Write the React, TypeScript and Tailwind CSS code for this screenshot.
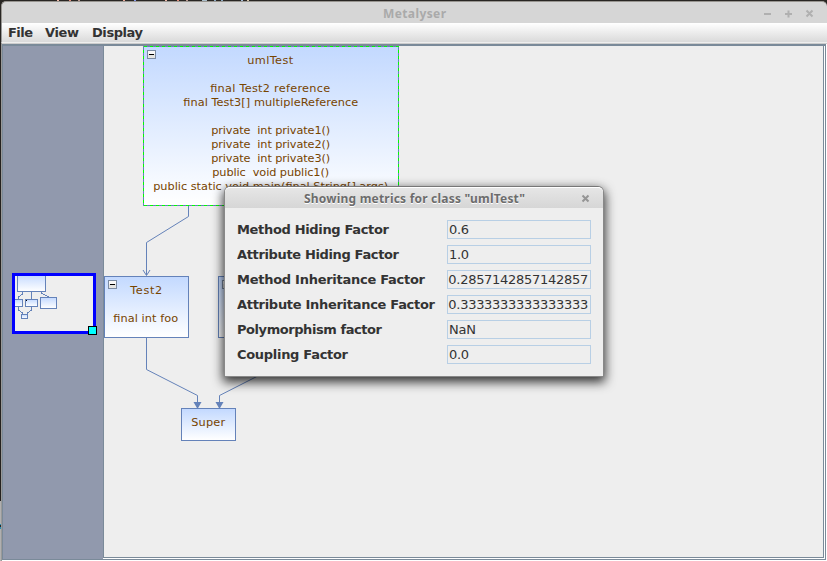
import React from 'react';

type Line = [text: string, width: number];

const metrics: { label: string; value: string; width: string; valueWidth: number; tight?: boolean }[] = [
  { label: 'Method Hiding Factor', value: '0.6', width: '152', valueWidth: 20 },
  { label: 'Attribute Hiding Factor', value: '1.0', width: '162', valueWidth: 20 },
  { label: 'Method Inheritance Factor', value: '0.2857142857142857', width: '188', valueWidth: 140, tight: true },
  { label: 'Attribute Inheritance Factor', value: '0.3333333333333333', width: '198', valueWidth: 140, tight: true },
  { label: 'Polymorphism factor', value: 'NaN', width: '145', valueWidth: 27 },
  { label: 'Coupling Factor', value: '0.0', width: '111', valueWidth: 20 },
];

function Collapse() {
  return (
    <svg className="absolute top-[3px] left-[3px]" width="9" height="9" shapeRendering="crispEdges">
      <rect x="0.5" y="0.5" width="8" height="8" rx="1" fill="#e4e4e2" stroke="#7b8ba3" />
      <rect x="1" y="1" width="7" height="3" fill="#f8f8f8" />
      <rect x="2" y="4" width="5" height="1" fill="#000" />
    </svg>
  );
}

function Node({ className, lines, collapsible }: { className: string; lines: Line[]; collapsible?: boolean }) {
  return (
    <div className={`absolute border border-[#6482b9] bg-linear-to-b from-[#c3d9ff] to-white pt-[7px] ${className}`}>
      {collapsible && <Collapse />}
      {lines.map(([text, width], i) => (
        <div key={i} className="flex h-[14px] justify-center">
          {text && (
            <svg className="block overflow-visible" width={width} height="14">
              <text className="whitespace-pre" x="-0.8" y="10" fontSize="11.3" fill="#774400" textLength={width}>
                {text}
              </text>
            </svg>
          )}
        </div>
      ))}
    </div>
  );
}

function MiniMap() {
  return (
    <div className="relative h-[61px] w-[84px] border-[3px] border-[#0000ff] bg-[#eeeeee]">
      <svg className="block" width="78" height="55">
        <defs>
          <linearGradient id="mini" x1="0" y1="0" x2="0" y2="1">
            <stop offset="0" stopColor="#c3d9ff" />
            <stop offset="1" stopColor="#fff" />
          </linearGradient>
        </defs>
        <g fill="none" stroke="#6482b9" shapeRendering="crispEdges">
          <path d="M7.5 16v2l-4 3v2M16.5 16v7M26.5 16v1l7 4M3.5 31v3l4 3v1M16.5 31v3l-4 3v1" />
          <g fill="url(#mini)">
            <rect x="2.5" y="-1.5" width="28" height="17" />
            <rect x="-3.5" y="23.500" width="11" height="7" />
            <rect x="10.500" y="23.500" width="12" height="7" />
            <rect x="25.500" y="21.500" width="16" height="11" />
            <rect x="6.500" y="38.500" width="6" height="4" />
          </g>
        </g>
        <rect x="11" y="24" width="1" height="1" fill="#000" />
      </svg>
      <div className="absolute right-[-4px] bottom-[-4px] h-[9px] w-[9px] border border-black bg-[#00ffff]" />
    </div>
  );
}

function Graph() {
  return (
    <div className="relative h-[511px] w-[719px] overflow-hidden bg-[#eeeeee]">
      <svg className="absolute inset-0" width="720" height="512" viewBox="104 46 720 512">
        <g fill="none" stroke="#6482b9" strokeWidth="1">
          <path d="M188.500 206v10.500L146.500 242.500V275" />
          <path d="M143 270l3.500 5.500L150 270" />
          <path d="M146.500 338v31.500L197.500 395.500V402" />
          <path d="M299 355L219.500 395.500V402" />
        </g>
        <g fill="#6482b9">
          <path d="M193.500 402h8l-4 7zM215.500 402h8l-4 7z" />
        </g>
      </svg>
      <Node
        className="top-0 left-[39px] h-[160px] w-[256px]"
        collapsible
        lines={[
          ['umlTest', 46],
          ['', 0],
          ['final Test2 reference', 120],
          ['final Test3[] multipleReference', 175],
          ['', 0],
          ['private  int private1()', 119],
          ['private  int private2()', 119],
          ['private  int private3()', 119],
          ['public  void public1()', 117],
          ['public static void main(final String[] args)', 235],
        ]}
      />
      <svg className="absolute top-0 left-[39px]" width="256" height="160" shapeRendering="crispEdges">
        <rect x="0.5" y="0.5" width="255" height="159" fill="none" stroke="#00ff00" strokeDasharray="3 3" />
      </svg>
      <Node className="top-[230px] left-0 h-[62px] w-[85px]" collapsible lines={[['Test2', 32], ['', 0], ['final int foo', 65]]} />
      <Node className="top-[230px] left-[114px] h-[62px] w-[85px]" collapsible lines={[]} />
      <Node className="top-[362px] left-[77px] h-[33px] w-[55px]" lines={[['Super', 34]]} />
    </div>
  );
}

function Dialog() {
  return (
    <div className="absolute top-[186px] left-[224px] h-[191px] w-[380px] rounded-t-[6px] border border-[#888] border-t-[#777] bg-[#eeeeee] shadow-[0_4px_11px_1px_rgba(0,0,0,0.8)]">
      <div className="relative flex h-[21px] items-center justify-center rounded-t-[5px] border-t border-white bg-linear-to-b from-[#e6e6e6] to-[#d6d6d6]">
        <svg className="block" width="378" height="20">
          <g fontFamily="'Noto Sans', sans-serif" fontSize="12" fontWeight="bold">
            <text x="79" y="15.500" textLength="221" fill="#fff">Showing metrics for class "umlTest"</text>
            <text x="79" y="14.500" textLength="221" fill="#6c6c6c">Showing metrics for class "umlTest"</text>
          </g>
          <path d="M357.500 7.500l6 6m0-6l-6 6" stroke="#959595" strokeWidth="2" />
        </svg>
      </div>
      <div className="flex flex-col gap-[6px] pt-[12px] pl-[12px]">
        {metrics.map((m) => (
          <div key={m.label} className="flex h-[19px] items-center">
            <svg className="block w-[210px]" height="19">
              <text x="0" y="14" fontSize="13" fontWeight="bold" fill="#333" textLength={m.width}>
                {m.label}
              </text>
            </svg>
            <div className="h-[19px] w-[144px] overflow-hidden border border-[#b8cfe5]">
              <svg className="block" width="142" height="17">
                <text x={m.tight ? 0.3 : 1} y="13" fontSize="13" fill="#333" textLength={m.valueWidth}>
                  {m.value}
                </text>
              </svg>
            </div>
          </div>
        ))}
      </div>
    </div>
  );
}

export default function App() {
  return (
    <div className="relative flex h-[561px] w-[827px] flex-col overflow-hidden bg-[#292623] font-['DejaVu_Sans',sans-serif]">
      <div className="flex h-px shrink-0">
        <div className="ml-[57px] h-px w-[2px] bg-[#efb9a8]" />
        <div className="ml-[10px] h-px w-[2px] bg-[#e18a78]" />
        <div className="ml-[7px] h-px w-[2px] bg-[#b9988e]" />
        <div className="ml-[43px] h-px w-[2px] bg-[#e9a898]" />
        <div className="ml-[9px] h-px w-[2px] bg-[#8498e9]" />
        <div className="ml-[29px] h-px w-[2px] bg-[#efb9a8]" />
        <div className="ml-[10px] h-px w-[2px] bg-[#e18a78]" />
        <div className="ml-[7px] h-px w-[2px] bg-[#b9988e]" />
        <div className="ml-[14px] h-px w-[5px] bg-[#a9bdc9]" />
        <div className="ml-[7px] h-px w-[2px] bg-[#8ba8c0]" />
        <div className="ml-[5px] h-px w-[2px] bg-[#8ba8c0]" />
        <div className="ml-[18px] h-px w-[2px] bg-[#a4bcd7]" />
        <div className="ml-[4px] h-px w-[2px] bg-[#d8c6a9]" />
      </div>
      <div className="ml-px h-[22px] shrink-0 rounded-t-[5px] border-t border-l border-[#989590] bg-[#d6d6d6]">
        <svg className="block" width="825" height="21">
          <text x="381" y="16" fontFamily="'Noto Sans', sans-serif" fontSize="12" fontWeight="bold" textLength="63" fill="#aaa">
            Metalyser
          </text>
          <g stroke="#b0b0b0" strokeWidth="2" fill="none">
            <path d="M762 12h7M783 12h7M786.500 8.500v7M804.500 8.500l6 6m0-6l-6 6" />
          </g>
        </svg>
      </div>
      <div className="ml-px flex h-[20px] shrink-0 border-b border-l border-b-[#eee] border-l-[#999] bg-linear-to-b from-white to-[#dadada]">
        <svg className="block" width="160" height="19">
          <g fontSize="13" fontWeight="bold" fill="#333">
            <text x="6" y="14" textLength="25">File</text>
            <text x="43" y="14" textLength="34">View</text>
            <text x="90" y="14" textLength="51">Display</text>
          </g>
        </svg>
      </div>
      <div className="flex h-[518px] shrink-0">
        <div className="flex w-[2px] shrink-0 flex-col border-r border-[#999]">
          <div className="h-[458px] bg-[#24211f]" />
          <div className="h-[23px] bg-[#b0b0b0]" />
          <div className="h-px bg-[#258eb6]" />
          <div className="h-[2px] bg-[#282828]" />
          <div className="h-[2px] bg-[#258eb6]" />
          <div className="grow bg-[#b0b0b0]" />
        </div>
        <div className="flex w-[825px] flex-col bg-white">
          <div className="h-px bg-[#ccc]" />
          <div className="flex h-[516px] w-[824px] border-t-2 border-r border-b border-l border-[#7a8a99]">
            <div className="h-[513px] w-[100px] shrink-0 bg-[#9199ad] pt-[227px] pl-[9px]">
              <MiniMap />
            </div>
            <div className="flex h-[512px] border-l border-[#7a8a99]">
              <div className="h-[512px] w-[720px] shrink-0 border-r border-b border-[#7a8a99]">
                <Graph />
              </div>
              <div className="w-px shrink-0 bg-white" />
            </div>
          </div>
          <div className="h-px bg-white" />
        </div>
      </div>
      <Dialog />
    </div>
  );
}
